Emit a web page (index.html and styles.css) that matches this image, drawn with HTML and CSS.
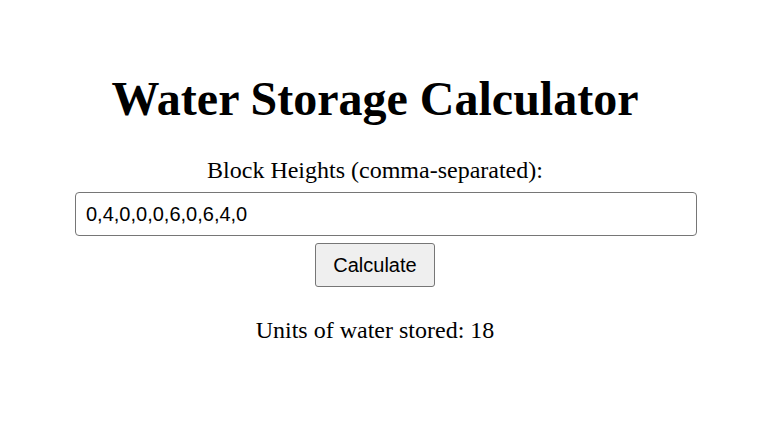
FILE: index.html
```html
<!DOCTYPE html>
<html>
<head>
<meta charset="utf-8">
<link rel="stylesheet" href="styles.css">
</head>
<body>
<div class="container">
  <h1 class="title">Water Storage Calculator</h1>
  <label class="label" for="heights">Block Heights (comma-separated):</label>
  <input class="field" id="heights" type="text" value="0,4,0,0,0,6,0,6,4,0">
  <button class="btn">Calculate</button>
  <p class="result">Units of water stored: 18</p>
</div>
</body>
</html>
```

FILE: styles.css
```css
html, body {
  margin: 0;
  padding: 0;
  background: #fff;
}
body {
  font-family: "Liberation Serif", "Times New Roman", serif;
  padding-right: 17px;
}
.container {
  width: 600px;
  margin: 0 auto;
  text-align: center;
  padding-top: 71px;
}
.title {
  font-size: 48px;
  font-weight: bold;
  margin: 0 0 29px 0;
  line-height: 56px;
}
.label {
  display: block;
  font-size: 24px;
  line-height: 28px;
  margin-bottom: 8px;
}
.field {
  display: block;
  width: 100%;
  font-family: "Liberation Sans", Arial, sans-serif;
  font-size: 20px;
  line-height: 22px;
  padding: 10px;
  border: 1px solid #767676;
  border-radius: 4px;
  margin: 0;
  color: #000;
}
.btn {
  font-family: "Liberation Sans", Arial, sans-serif;
  font-size: 20px;
  line-height: 22px;
  padding: 10px 17px;
  margin-top: 7px;
  border: 1px solid #767676;
  border-radius: 3px;
  background: #efefef;
  color: #000;
}
.result {
  font-size: 24px;
  line-height: 28px;
  margin: 29px 0 0 0;
}
```
